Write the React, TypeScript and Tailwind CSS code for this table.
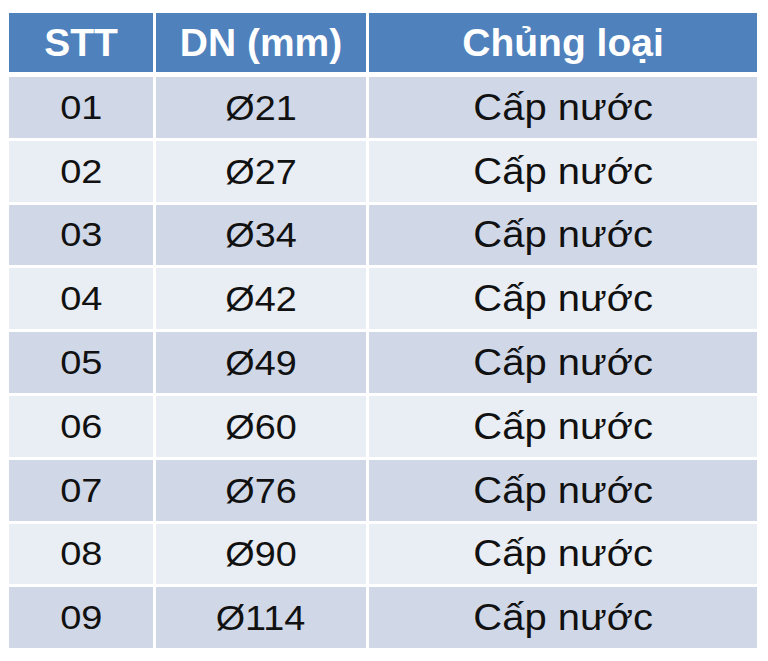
import { clsx } from 'clsx';

type PipeRow = {
  stt: string;
  dn: string;
  kind: string;
};

const rows: PipeRow[] = [
  { stt: '01', dn: 'Ø21', kind: 'Cấp nước' },
  { stt: '02', dn: 'Ø27', kind: 'Cấp nước' },
  { stt: '03', dn: 'Ø34', kind: 'Cấp nước' },
  { stt: '04', dn: 'Ø42', kind: 'Cấp nước' },
  { stt: '05', dn: 'Ø49', kind: 'Cấp nước' },
  { stt: '06', dn: 'Ø60', kind: 'Cấp nước' },
  { stt: '07', dn: 'Ø76', kind: 'Cấp nước' },
  { stt: '08', dn: 'Ø90', kind: 'Cấp nước' },
  { stt: '09', dn: 'Ø114', kind: 'Cấp nước' },
];

const cols = 'grid grid-cols-[144px_210px_388px] gap-x-[3px]';

export default function App() {
  return (
    <div
      className="w-[768px] h-[661px] bg-white pt-[13px] pl-[9px] overflow-hidden"
      style={{ fontFamily: '"Liberation Sans", Arial, sans-serif' }}
    >
      <div className="w-[748px] flex flex-col">
        {/* header */}
        <div className={clsx(cols, 'h-[59px] text-white font-bold text-[39px] leading-none')}>
          <div className="bg-[#4f81bd] flex items-center justify-center">STT</div>
          <div className="bg-[#4f81bd] flex items-center justify-center">DN (mm)</div>
          <div className="bg-[#4f81bd] flex items-center justify-center">Chủng loại</div>
        </div>

        {/* body - the source text is a little wider than Arial, hence the scale-x */}
        <div className="mt-[5px] flex flex-col gap-[3px]">
          {rows.map((row, i) => {
            const bg = i % 2 === 0 ? 'bg-[#d0d8e8]' : 'bg-[#e9edf4]';
            return (
              <div key={row.stt} className={clsx(cols, 'h-[60.8px] text-[#111] leading-none')}>
                <div className={clsx(bg, 'flex items-center justify-center')}>
                  <span className="inline-block text-[33px] scale-x-[1.15]">{row.stt}</span>
                </div>
                <div className={clsx(bg, 'flex items-center justify-center')}>
                  <span className="inline-block text-[35px] scale-x-[1.08]">{row.dn}</span>
                </div>
                <div className={clsx(bg, 'flex items-center justify-center')}>
                  <span className="inline-block text-[37px] scale-x-[1.08]">{row.kind}</span>
                </div>
              </div>
            );
          })}
        </div>
      </div>
    </div>
  );
}
